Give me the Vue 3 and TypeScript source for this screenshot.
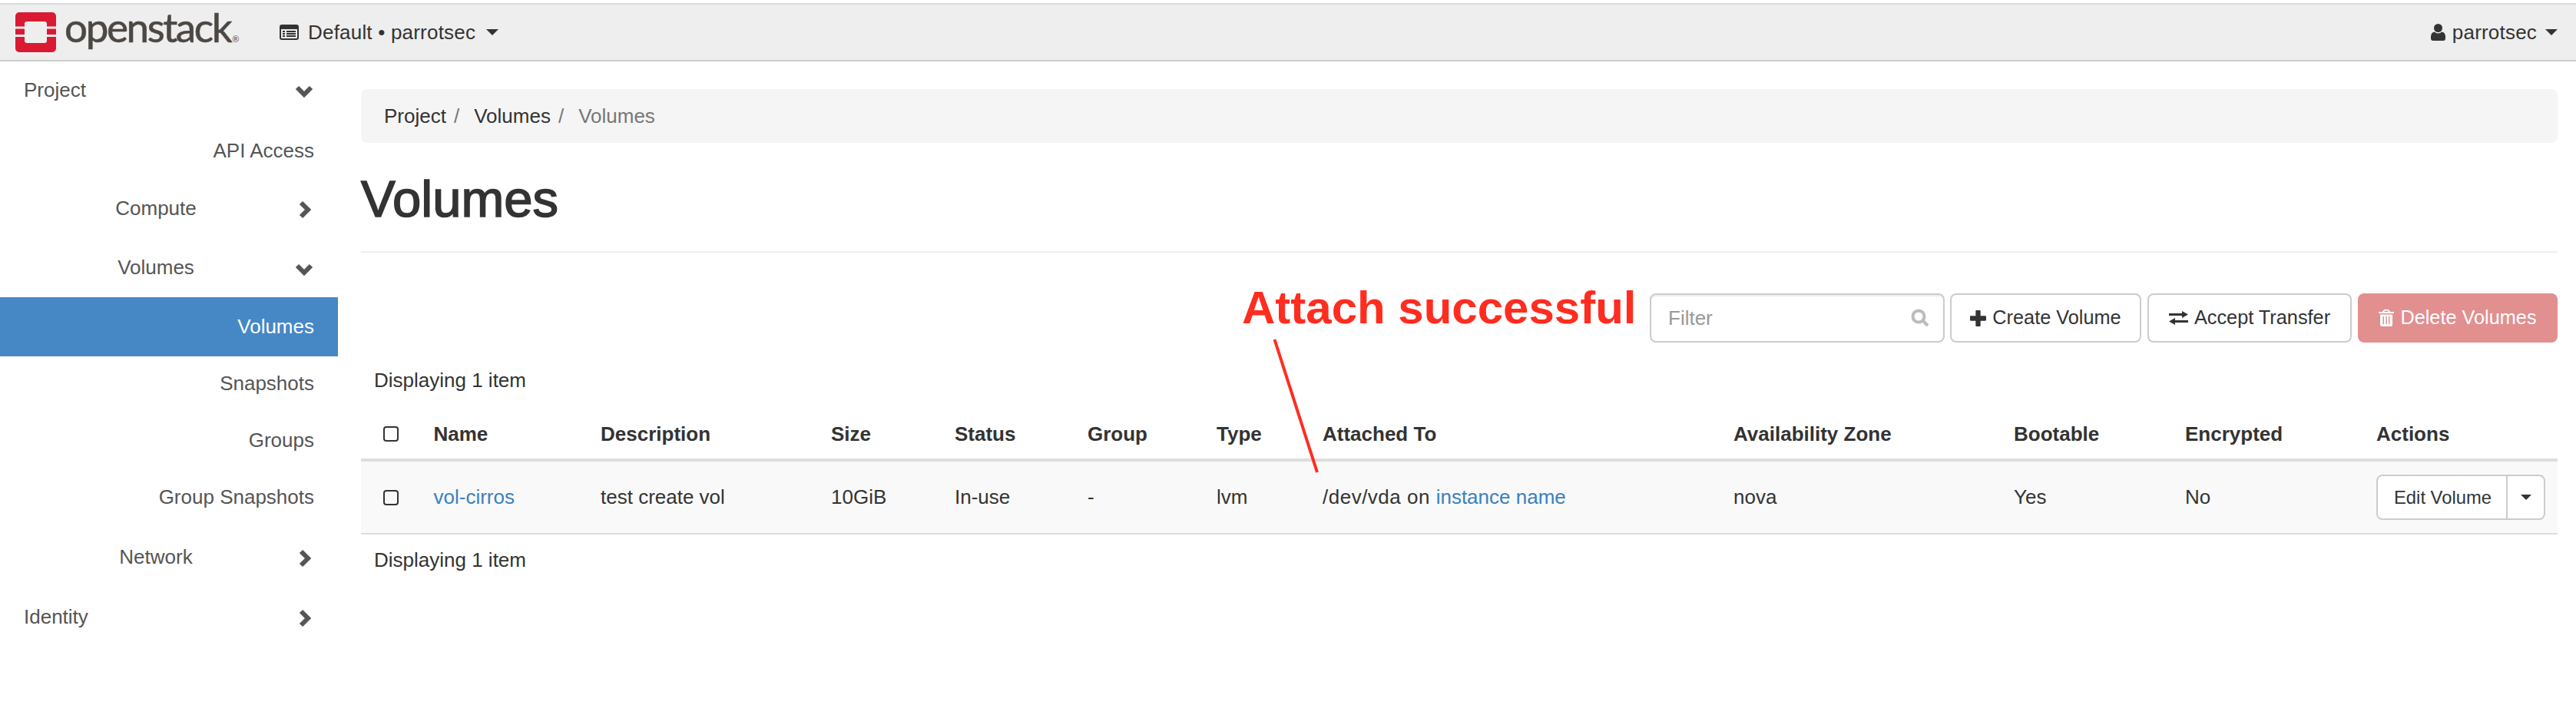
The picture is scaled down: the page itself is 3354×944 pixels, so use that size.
<script setup lang="ts">
const columns = [
  { key: 'name', label: 'Name' },
  { key: 'desc', label: 'Description' },
  { key: 'size', label: 'Size' },
  { key: 'status', label: 'Status' },
  { key: 'group', label: 'Group' },
  { key: 'type', label: 'Type' },
  { key: 'attached', label: 'Attached To' },
  { key: 'zone', label: 'Availability Zone' },
  { key: 'boot', label: 'Bootable' },
  { key: 'enc', label: 'Encrypted' },
  { key: 'actions', label: 'Actions' },
]

type NavItem = { label: string; level: number; gap: number; chevron?: 'down' | 'right'; active?: boolean }

// gap is the space above a row, the menu groups are not evenly spaced
const nav: NavItem[] = [
  { label: 'Project', level: 0, gap: 0, chevron: 'down' },
  { label: 'API Access', level: 2, gap: 5 },
  { label: 'Compute', level: 1, gap: 0, chevron: 'right' },
  { label: 'Volumes', level: 1, gap: 0, chevron: 'down' },
  { label: 'Volumes', level: 2, gap: 0, active: true },
  { label: 'Snapshots', level: 2, gap: -2 },
  { label: 'Groups', level: 2, gap: 0 },
  { label: 'Group Snapshots', level: 2, gap: 0 },
  { label: 'Network', level: 1, gap: 3, chevron: 'right' },
  { label: 'Identity', level: 0, gap: 1, chevron: 'right' },
]
</script>

<template>
  <div class="page">
    <header class="navbar">
      <div class="brand">
        <svg class="logo" viewBox="0 0 53 52">
          <path fill="#da1a32" d="M5 0h43a5 5 0 0 1 5 5v13.500H41V15a3 3 0 0 0-3-3H15a3 3 0 0 0-3 3v3.500H0V5a5 5 0 0 1 5-5z" />
          <path fill="#da1a32" d="M0 21.500h12V29H0zM41 21.500h12V29H41z" />
          <path fill="#da1a32" d="M0 32h12v5a3 3 0 0 0 3 3h23a3 3 0 0 0 3-3v-5h12v15a5 5 0 0 1-5 5H5a5 5 0 0 1-5-5z" />
        </svg>
        <span class="wordmark">openstack<small>®</small></span>
      </div>
      <div class="project-pick">
        <svg class="ico-list" viewBox="0 0 25 20">
          <path fill="#333" fill-rule="evenodd" d="M3 0h19a3 3 0 0 1 3 3v14a3 3 0 0 1-3 3H3a3 3 0 0 1-3-3V3a3 3 0 0 1 3-3zM2 6v11a1 1 0 0 0 1 1h19a1 1 0 0 0 1-1V6zM4 8h3v2H4zM9 8h12v2H9zM4 11h3v2H4zM9 11h12v2H9zM4 14h3v2H4zM9 14h12v2H9z" />
        </svg>
        <span>Default • parrotsec</span>
        <i class="caret"></i>
      </div>
      <div class="user-pick">
        <svg class="ico-user" viewBox="0 0 19 22">
          <circle cx="9.500" cy="5.500" r="5.500" fill="#333" />
          <path fill="#333" d="M5 10.500c1 1.200 2.700 2 4.500 2s3.500-.8 4.500-2c3 .3 5 2.500 5 6V19a3 3 0 0 1-3 3H3a3 3 0 0 1-3-3v-2.500c0-3.500 2-5.700 5-6z" />
        </svg>
        <span>parrotsec</span>
        <i class="caret"></i>
      </div>
    </header>

    <div class="body">
      <aside class="sidebar">
        <a
          v-for="(item, i) in nav"
          :key="i"
          class="nav-item"
          :class="[`level-${item.level}`, { active: item.active }]"
          :style="{ marginTop: item.gap + 'px' }"
        >
          <span class="nav-label">{{ item.label }}</span>
          <svg v-if="item.chevron === 'down'" class="chev" viewBox="0 0 24 24">
            <path d="M3 8l9 9 9-9" />
          </svg>
          <svg v-else-if="item.chevron === 'right'" class="chev" viewBox="0 0 24 24">
            <path d="M8 3l9 9-9 9" />
          </svg>
        </a>
      </aside>

      <main class="content">
        <nav class="breadcrumb">
          <span>Project</span><em>/</em>
          <span>Volumes</span><em>/</em>
          <span class="current">Volumes</span>
        </nav>

        <h1>Volumes</h1>
        <hr />

        <div class="toolbar">
          <div class="filter">
            <span>Filter</span>
            <svg class="ico-search" viewBox="0 0 24 24">
              <circle cx="10" cy="10" r="7.500" />
              <path d="M15.500 15.500L22 22" />
            </svg>
          </div>
          <button class="btn create">
            <svg class="ico-plus" viewBox="0 0 20 20"><path fill="#333" d="M8 0h4a1 1 0 0 1 1 1v6h6a1 1 0 0 1 1 1v4a1 1 0 0 1-1 1h-6v6a1 1 0 0 1-1 1H8a1 1 0 0 1-1-1v-6H1a1 1 0 0 1-1-1V8a1 1 0 0 1 1-1h6V1a1 1 0 0 1 1-1z" /></svg>
            Create Volume
          </button>
          <button class="btn accept">
            <svg class="ico-swap" viewBox="0 0 25 18"><path fill="#333" d="M0 3h17V0l8 4.500-8 4.500V6H0zM25 12H8V9l-8 4.500 8 4.500v-3h17z" /></svg>
            Accept Transfer
          </button>
          <button class="btn danger">
            <svg class="ico-trash" viewBox="0 0 20 22"><path fill="#fff" fill-rule="evenodd" d="M7 0h6l2 3h5v2H0V3h5zM8 1.500L7 3h6l-1-1.500zM2 6.500h16V20a2 2 0 0 1-2 2H4a2 2 0 0 1-2-2zM5.500 9v10H7V9zM9.300 9v10h1.500V9zM13 9v10h1.500V9z" /></svg>
            Delete Volumes
          </button>
        </div>

        <p class="count first">Displaying 1 item</p>

        <table class="volumes">
          <thead>
            <tr>
              <th class="col-check"><span class="check"></span></th>
              <th v-for="c in columns" :key="c.key" :class="`col-${c.key}`">{{ c.label }}</th>
            </tr>
          </thead>
          <tbody>
            <tr>
              <td class="col-check"><span class="check"></span></td>
              <td><a class="link">vol-cirros</a></td>
              <td>test create vol</td>
              <td>10GiB</td>
              <td>In-use</td>
              <td>-</td>
              <td>lvm</td>
              <td><span class="device">/dev/vda on </span><a class="link">instance name</a></td>
              <td>nova</td>
              <td>Yes</td>
              <td>No</td>
              <td>
                <div class="split">
                  <span class="split-main">Edit Volume</span>
                  <span class="split-toggle"><i class="caret small"></i></span>
                </div>
              </td>
            </tr>
          </tbody>
        </table>

        <p class="count last">Displaying 1 item</p>
      </main>
    </div>

    <div class="note">Attach successful</div>
    <svg class="note-line" viewBox="0 0 3354 944">
      <line x1="1659.500" y1="442" x2="1715" y2="615" />
    </svg>
  </div>
</template>

<style>
html, body { margin: 0; background: #fff; }
</style>

<style scoped>
.page {
  position: relative;
  width: 3354px;
  height: 944px;
  overflow: hidden;
  padding-top: 4px;
  box-sizing: border-box;
  font: 26px/1.4 "Liberation Sans", Arial, sans-serif;
  color: #333;
}
.navbar {
  display: flex;
  align-items: center;
  height: 72px;
  background: #eee;
  border-top: 2px solid #dcdcdc;
  border-bottom: 2px solid #ccc;
  padding: 0 24px 0 20px;
  letter-spacing: .2px;
}
.brand { display: flex; align-items: center; gap: 11px; width: 344px; flex: none; }
.logo { width: 53px; height: 52px; flex: none; }
.wordmark {
  font: 53px/52px Lato, "Liberation Sans", sans-serif;
  color: #4d4843;
  letter-spacing: -2.400px;
  -webkit-text-stroke: .6px #4d4843;
  position: relative;
  top: 1px;
}
.wordmark small { font-size: 11px; letter-spacing: 0; margin-left: 2px; -webkit-text-stroke: 0; }
.project-pick, .user-pick { display: flex; align-items: center; }
.project-pick { gap: 12px; }
.user-pick { margin-left: auto; gap: 9px; }
.ico-list { width: 25px; height: 20px; }
.ico-user { width: 19px; height: 22px; }
.caret {
  display: inline-block;
  width: 0;
  height: 0;
  border-left: 8px solid transparent;
  border-right: 8px solid transparent;
  border-top: 8px solid #333;
  margin-left: 2px;
}
.body { display: flex; }
.sidebar {
  width: 440px;
  flex: none;
  color: #555;
}
.nav-item {
  display: flex;
  align-items: center;
  height: 77px;
  padding-right: 31px;
  box-sizing: border-box;
  position: relative;
}
.nav-item:first-child { height: 74px; }
.level-0 { padding-left: 31px; justify-content: space-between; }
.level-1 { padding-left: 0; }
.level-1 .nav-label { width: 406px; text-align: center; }
.level-2 { justify-content: flex-end; height: 74px; }
.nav-item.active { background: #4688c6; color: #fff; height: 77px; }
.chev {
  width: 24px;
  height: 24px;
  fill: none;
  stroke: #555;
  stroke-width: 6;
  position: absolute;
  right: 32px;
  top: calc(50% - 11px);
}
.content { flex: 1; min-width: 0; padding: 36px 24px 0 30px; }
.breadcrumb {
  display: flex;
  align-items: center;
  height: 70px;
  background: #f5f5f5;
  border-radius: 8px;
  padding-left: 30px;
}
.breadcrumb em { font-style: normal; color: #777; margin: 0 19px 0 10px; }
.breadcrumb .current { color: #777; }
h1 {
  margin: 37px 0 0;
  font-size: 67px;
  line-height: 72px;
  font-weight: 400;
  -webkit-text-stroke: 1.600px #333;
}
hr { border: 0; border-top: 2px solid #eee; margin: 32px 0 0; }
.toolbar { display: flex; justify-content: flex-end; gap: 8px; margin-top: 53px; height: 64px; }
.filter {
  width: 384px;
  margin-right: -1px;
  box-sizing: border-box;
  border: 2px solid #ccc;
  border-radius: 8px;
  box-shadow: inset 0 2px 2px rgba(0, 0, 0, .075);
  display: flex;
  align-items: center;
  justify-content: space-between;
  padding: 0 18px 0 22px;
  color: #999;
}
.ico-search { width: 24px; height: 24px; fill: none; stroke: #bbb; stroke-width: 4; }
.btn {
  font: inherit;
  font-size: 25.300px;
  color: #333;
  background: #fff;
  border: 2px solid #ccc;
  border-radius: 8px;
  padding: 0;
  display: flex;
  align-items: center;
  justify-content: center;
  gap: 8px;
  box-sizing: border-box;
}
.btn.create { width: 249px; }
.btn.accept { width: 266px; }
.btn.danger { width: 260px; background: #e28f8f; border-color: #e28f8f; color: #fff; }
.ico-plus { width: 21px; height: 21px; }
.ico-swap { width: 25px; height: 18px; }
.ico-trash { width: 20px; height: 22px; }
.count { margin: 0; padding-left: 17px; line-height: 36px; }
.count.first { margin-top: 31px; }
.count.last { margin-top: 15px; }
.volumes { width: 100%; border-collapse: collapse; table-layout: fixed; margin-top: 20px; }
.volumes th { font-weight: 700; text-align: left; height: 66px; padding: 0; border-bottom: 4px solid #ddd; box-sizing: border-box; }
.volumes td { height: 93px; padding: 0; background: #f9f9f9; border-bottom: 2px solid #ddd; }
.col-check { width: 94.500px; }
.col-name { width: 217.500px; }
.col-desc { width: 300px; }
.col-size { width: 161px; }
.col-status { width: 173px; }
.col-group { width: 168px; }
.col-type { width: 138px; }
.col-attached { width: 535px; }
.col-zone { width: 365px; }
.col-boot { width: 223px; }
.col-enc { width: 249px; }
.check {
  display: block;
  width: 20px;
  height: 20px;
  margin-left: 29px;
  border: 2px solid #333;
  border-radius: 4px;
  box-sizing: border-box;
}
.link { color: #3a80c0; }
.device { letter-spacing: .5px; }
.split { display: inline-flex; height: 59px; border: 2px solid #ccc; border-radius: 8px; background: #fff; box-sizing: border-box; font-size: 23.800px; vertical-align: middle; }
.split-main { display: flex; align-items: center; width: 169px; padding-left: 21px; box-sizing: border-box; border-right: 2px solid #ccc; }
.split-toggle { display: flex; align-items: center; justify-content: center; width: 47px; }
.caret.small { border-left-width: 7px; border-right-width: 7px; border-top-width: 7px; margin: 0; }
.note {
  position: absolute;
  left: 1617px;
  top: 367px;
  font-size: 60px;
  line-height: 68px;
  font-weight: 700;
  color: #ff2d20;
}
.note-line { position: absolute; left: 0; top: 0; width: 3354px; height: 944px; pointer-events: none; }
.note-line line { stroke: #ff2d20; stroke-width: 4; }
</style>
